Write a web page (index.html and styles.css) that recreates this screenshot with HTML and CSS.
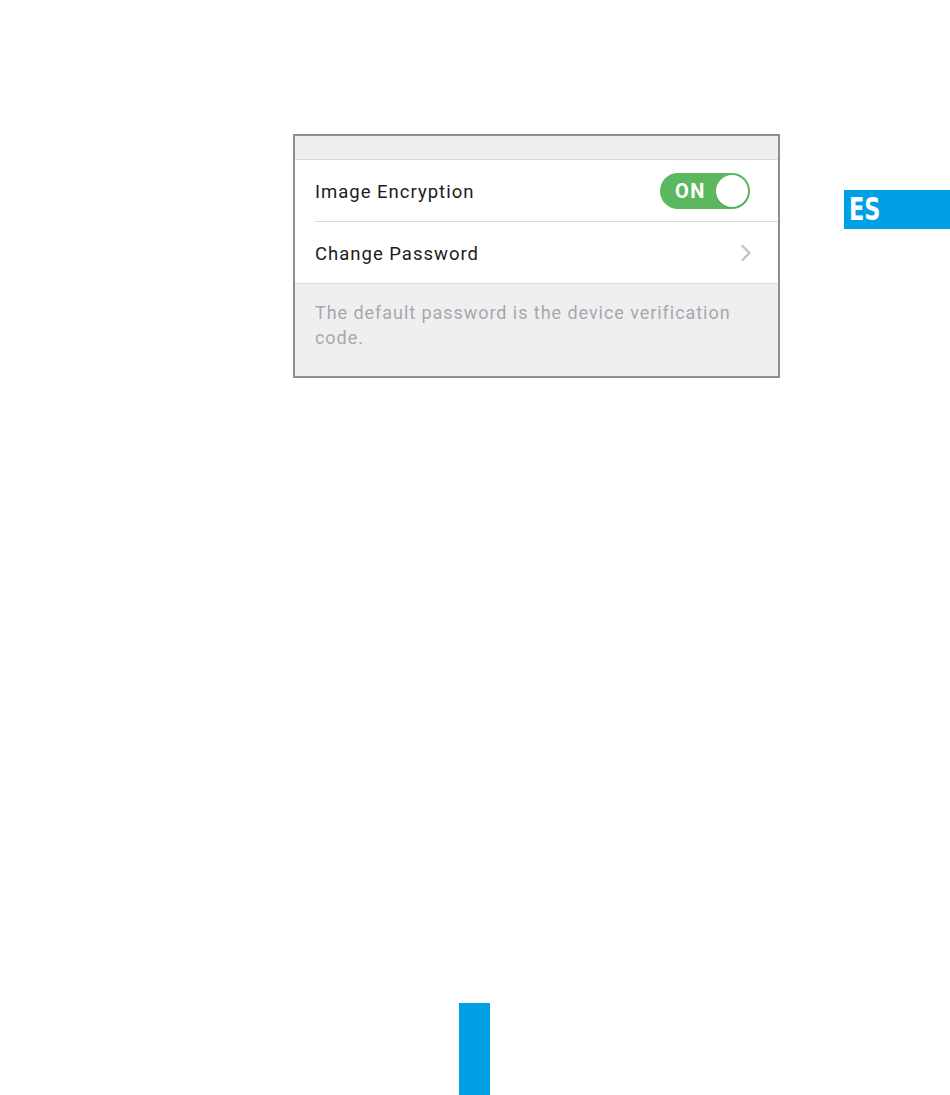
FILE: index.html
```html
<!DOCTYPE html>
<html lang="en">
<head>
  <meta charset="UTF-8" />
  <meta name="viewport" content="width=device-width, initial-scale=1.0"/>
  <title>Image Encryption</title>
  <link rel="stylesheet" href="styles.css">
</head>
<body>

  <div class="page">
    <div class="card">
      <div class="card-top"></div>

      <div class="row row-inset">
        <span class="row-label">Image Encryption</span>
        <span class="toggle">
          <span class="toggle-text">ON</span>
          <span class="toggle-knob"></span>
        </span>
      </div>

      <div class="row">
        <span class="row-label">Change Password</span>
        <svg class="chevron" width="12" height="18" viewBox="0 0 12 18">
          <path d="M2.5 2 L9.5 9 L2.5 16" fill="none" stroke="#c4c4c8" stroke-width="2.4" stroke-linecap="round" stroke-linejoin="round"/>
        </svg>
      </div>

      <div class="card-note">
        The default password is the device verification code.
      </div>
    </div>

    <div class="lang-tab"><span>ES</span></div>
    <div class="page-mark"></div>
  </div>

</body>
</html>
```

FILE: styles.css
```css
:root {
  --blue: #00a0e6;
  --green: #5cb85f;
  --line: #dadadc;
  --grey-bg: #efeff1;
}

body {
  margin: 0;
  background: #fff;
  font-family: Roboto, 'Liberation Sans', sans-serif;
}

.page {
  position: relative;
  width: 950px;
  height: 1095px;
  padding-top: 134px;
  box-sizing: border-box;
  overflow: hidden;
}

.card {
  margin-left: 293px;
  width: 487px;
  box-sizing: border-box;
  border: 2px solid #8e8e8e;
  background: #fff;
}

.card-top {
  height: 23px;
  background: var(--grey-bg);
  border-bottom: 1px solid var(--line);
}

.row {
  height: 61px;
  display: flex;
  align-items: center;
  justify-content: space-between;
  padding: 0 26px 0 20px;
  border-bottom: 1px solid var(--line);
}

.row-inset {
  border-bottom: none;
  position: relative;
  padding-right: 28px;
}

.row-inset::after {
  content: "";
  position: absolute;
  left: 20px;
  right: 0;
  bottom: -1px;
  height: 1px;
  background: var(--line);
}

.row-inset + .row {
  margin-top: 1px;
}

.row-label {
  font-size: 18.5px;
  letter-spacing: 1px;
  color: #1c1c1c;
  padding-top: 2px;
}

.toggle {
  width: 90px;
  height: 36px;
  border-radius: 18px;
  background: var(--green);
  display: flex;
  align-items: center;
  justify-content: space-between;
  box-sizing: border-box;
  padding: 0 2px 0 15px;
}

.toggle-text {
  color: #fff;
  font-weight: bold;
  font-size: 20px;
  letter-spacing: 1.5px;
}

.toggle-knob {
  width: 32px;
  height: 32px;
  border-radius: 50%;
  background: #fff;
  box-shadow: 0 1px 2px rgba(0, 0, 0, 0.12);
}

.chevron {
  display: block;
}

.card-note {
  background: var(--grey-bg);
  height: 92px;
  box-sizing: border-box;
  padding: 16px 30px 0 20px;
  font-size: 18px;
  line-height: 25px;
  color: #a8a8aa;
  letter-spacing: 0.95px;
}

.lang-tab {
  position: absolute;
  top: 190px;
  left: 844px;
  width: 106px;
  height: 39px;
  background: var(--blue);
  color: #fff;
  font-family: 'DejaVu Sans', sans-serif;
  font-weight: bold;
  font-size: 32px;
  line-height: 39px;
  padding-left: 5px;
  box-sizing: border-box;
}

.lang-tab span {
  display: inline-block;
  transform: scaleX(0.7);
  transform-origin: left center;
}

.page-mark {
  position: absolute;
  left: 459px;
  top: 1003px;
  width: 31px;
  height: 92px;
  background: var(--blue);
}
```
